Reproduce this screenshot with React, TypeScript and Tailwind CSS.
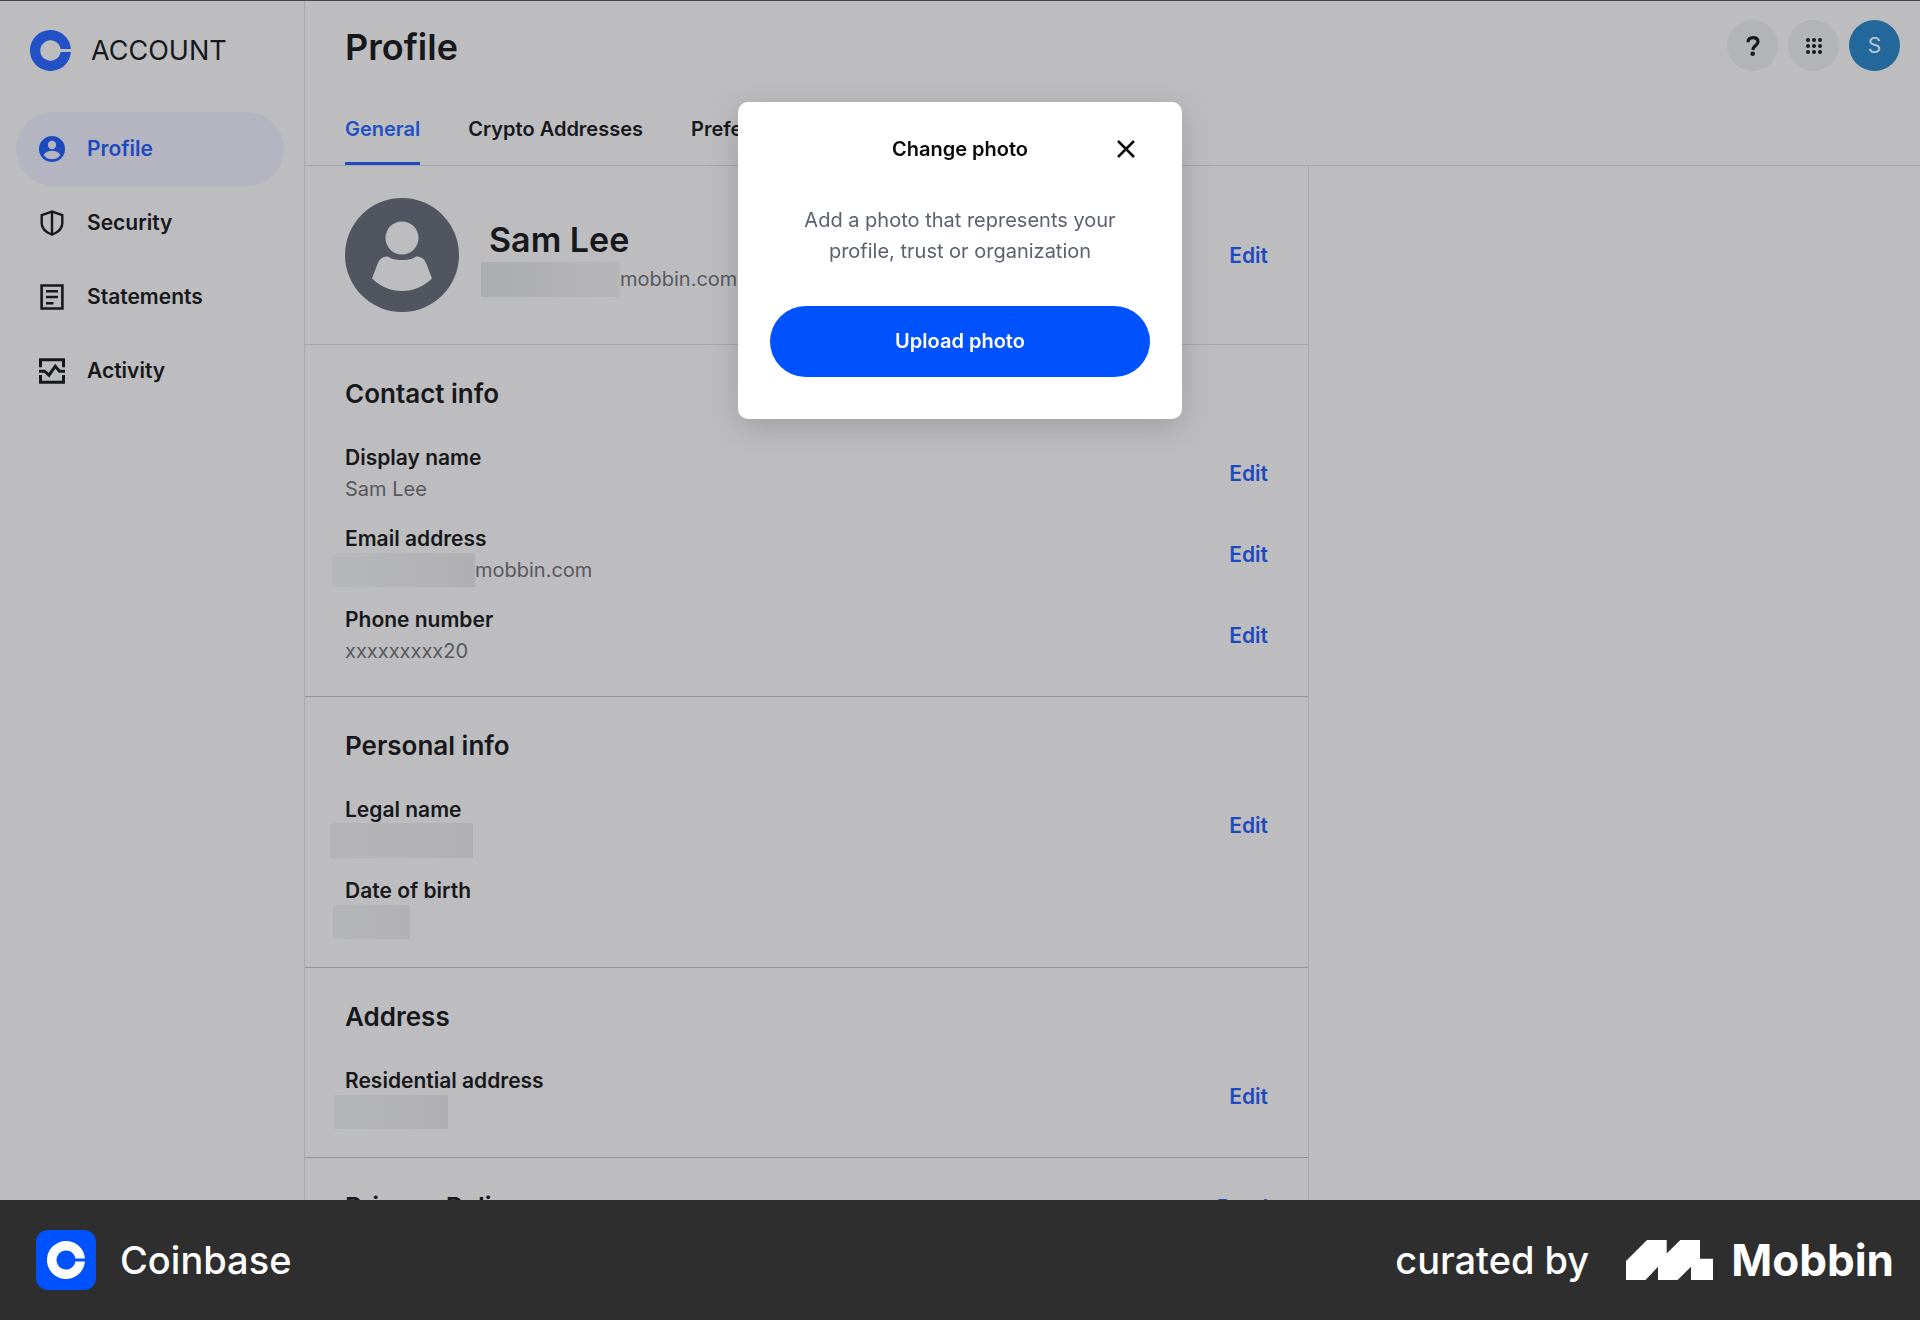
import type { ReactNode } from 'react';

function CoinMark({ className }: { className: string }) {
  return (
    <svg viewBox="0 0 40 40" className={className} aria-hidden="true">
      <path
        fill="currentColor"
        d="M20 0a20 20 0 1 0 19.9 21.5H29.9A10 10 0 1 1 29.9 18.5H39.9A20 20 0 0 0 20 0z"
      />
    </svg>
  );
}

function ProfileIcon() {
  return (
    <svg viewBox="0 0 26 26" className="size-[26px]" aria-hidden="true">
      <circle cx="13" cy="13" r="13" fill="currentColor" />
      <circle cx="13" cy="9" r="4.2" fill="#b4b5c1" />
      <path d="M4.5 19C6.5 16 9.5 14.8 13 14.8S19.500 16 21.500 19C19.500 21.700 16.500 23.300 13 23.300S6.500 21.700 4.500 19z" fill="#b4b5c1" />
    </svg>
  );
}

function ShieldIcon() {
  return (
    <svg viewBox="0 0 26 26" className="size-[26px]" fill="none" stroke="currentColor" strokeWidth="2.400" aria-hidden="true">
      <path d="M13 1.600 2.700 5V13.500C2.700 19 7.500 22.500 13 24.700 18.500 22.500 23.300 19 23.300 13.500V5z" />
      <path d="M13 1.600V24.700" />
    </svg>
  );
}

function StatementIcon() {
  return (
    <svg viewBox="0 0 26 26" className="size-[26px]" fill="none" stroke="currentColor" strokeWidth="2.600" aria-hidden="true">
      <path d="M2.600 1.500H23.400V24.500H2.600z" />
      <path d="M7 7.300H19M7 13H19M7 19.300H14.500" />
    </svg>
  );
}

function ActivityIcon() {
  return (
    <svg viewBox="0 0 26 26" className="size-[26px]" fill="none" stroke="currentColor" strokeWidth="3" aria-hidden="true">
      <path d="M1.500 9.300V1.700H24.500V9.300M1.500 17V24.300H24.500V17" />
      <path d="M0 13.200H5.500L10 17.200 16.300 8.200 20.500 13.200H26" />
    </svg>
  );
}

const navItems: { label: string; icon: ReactNode; active?: boolean }[] = [
  { label: 'Profile', icon: <ProfileIcon />, active: true },
  { label: 'Security', icon: <ShieldIcon /> },
  { label: 'Statements', icon: <StatementIcon /> },
  { label: 'Activity', icon: <ActivityIcon /> },
];

function Sidebar() {
  return (
    <aside className="w-[305px] shrink-0 border-r border-[#a9a9ac]">
      <a href="#account" className="flex items-center gap-5 pt-[29px] pl-[30px]">
        <CoinMark className="size-[41px] text-[#2251c5]" />
        <span className="text-[27px] leading-[41px]">ACCOUNT</span>
      </a>
      <nav className="mt-[41px] pr-5 pl-4">
        {navItems.map((item) => (
          <a
            key={item.label}
            href={'#' + item.label.toLowerCase()}
            className={
              item.active
                ? 'flex h-[74px] items-center gap-[22px] rounded-full bg-[#b4b5c1] pl-[23px] text-[21px] font-semibold text-[#1d4abf]'
                : 'flex h-[74px] items-center gap-[22px] rounded-full pl-[23px] text-[21px] font-semibold'
            }
          >
            {item.icon}
            {item.label}
          </a>
        ))}
      </nav>
    </aside>
  );
}

function Header() {
  return (
    <header className="flex h-[165px] shrink-0 flex-col justify-between border-b border-[#a5a6a9] pr-5 pl-10">
      <div className="flex items-start justify-between pt-[19px]">
        <h1 className="text-[36px] leading-[54px] font-semibold">Profile</h1>
        <div className="flex gap-[10px]">
          <button aria-label="Help" className="flex size-[51px] items-center justify-center rounded-full bg-[#b2b4b8]">
            <svg viewBox="0 0 14 20" className="h-5 w-3.5" aria-hidden="true">
              <path d="M2 6.200C2 3.200 4 1.700 7 1.700S12 3.200 12 6C12 9.200 7.200 9.300 6.800 14" fill="none" stroke="currentColor" strokeWidth="3.200" />
              <circle cx="6.700" cy="17.700" r="2.300" fill="currentColor" />
            </svg>
          </button>
          <button aria-label="Apps" className="flex size-[51px] items-center justify-center rounded-full bg-[#b2b4b8]">
            <svg viewBox="0 0 16 16" className="size-4" fill="currentColor" aria-hidden="true">
              {[2, 8, 14].map((y) => [2, 8, 14].map((x) => <circle key={x + '-' + y} cx={x} cy={y} r="2" />))}
            </svg>
          </button>
          <button aria-label="Account menu" className="size-[51px] rounded-full bg-[#23689a] text-[21px] text-[#b9c6d0]">
            S
          </button>
        </div>
      </div>
      <nav className="flex gap-12 text-xl leading-[31px] font-semibold">
        <a href="#general" className="border-b-3 border-[#1d4abf] pb-[17px] text-[#2251c5]">
          General
        </a>
        <a href="#crypto">Crypto Addresses</a>
        <a href="#preferences">Preferences</a>
      </nav>
    </header>
  );
}

function EditButton({ label = 'Edit' }: { label?: string }) {
  return <button className="text-[21px] leading-[31px] font-semibold text-[#1d4abf]">{label}</button>;
}

function Section({ title, action, children }: { title: string; action?: ReactNode; children?: ReactNode }) {
  return (
    <section className="border-b border-[#929498] px-10 pt-[31px] pb-[30px]">
      <div className="flex items-center justify-between">
        <h2 className="text-[26px] leading-9 font-semibold">{title}</h2>
        {action}
      </div>
      <div className="mt-[30px] flex flex-col gap-[19px]">{children}</div>
    </section>
  );
}

function Row({ label, editable = true, children }: { label: string; editable?: boolean; children: ReactNode }) {
  return (
    <div className="flex items-center justify-between leading-[31px]">
      <div>
        <h3 className="text-[21px] font-semibold">{label}</h3>
        <div className="flex h-[31px] items-center text-xl text-[#57585f]">{children}</div>
      </div>
      {editable && <EditButton />}
    </div>
  );
}

function Dialog() {
  return (
    <div className="fixed inset-0 flex items-start justify-center pt-[102px]">
      <div
        role="dialog"
        aria-labelledby="dialog-title"
        className="w-[444px] rounded-[10px] bg-white px-8 pt-[31px] pb-[42px] text-center text-xl leading-[31px] shadow-[0_8px_32px_rgba(0,0,0,0.16)]"
      >
        <div className="grid grid-cols-[32px_1fr_32px] items-center px-2">
          <h2 id="dialog-title" className="col-start-2 font-semibold text-[#0a0b0d]">
            Change photo
          </h2>
          <button aria-label="Close" className="flex h-8 items-center justify-center">
            <svg viewBox="0 0 18 18" className="size-[18px]" fill="none" stroke="#0a0b0d" strokeWidth="2.500" aria-hidden="true">
              <path d="M1 1 17 17M17 1 1 17" />
            </svg>
          </button>
        </div>
        <p className="mt-10 text-[#5b616e]">
          Add a photo that represents your
          <br />
          profile, trust or organization
        </p>
        <button className="mt-[39px] h-[71px] w-full rounded-full bg-[#0052ff] font-semibold text-white">Upload photo</button>
      </div>
    </div>
  );
}

function Footer() {
  return (
    <footer className="relative z-10 flex h-[120px] shrink-0 items-center justify-between bg-[#2e2e2e] pr-[26px] pl-9 text-white">
      <div className="flex items-center gap-6">
        <span className="flex size-[60px] items-center justify-center rounded-xl bg-[#0052ff]">
          <CoinMark className="size-[38px] text-white" />
        </span>
        <span className="text-[38px] leading-[60px] font-medium">Coinbase</span>
      </div>
      <div className="flex items-center">
        <span className="text-[38px] leading-[60px] font-medium">curated by</span>
        <svg viewBox="0 0 87 40" className="mr-[18px] ml-[37px] h-10 w-[87px]" fill="currentColor" aria-hidden="true">
          <path d="M0 21 21 0H40.700V13.500L54.300 0H74V18.700H87V40H65V26.700L51.600 40H32V26.700L19.500 40H0z" />
        </svg>
        <span className="text-[44px] leading-[60px] font-bold">Mobbin</span>
      </div>
    </footer>
  );
}

export default function App() {
  return (
    <div className="flex h-screen flex-col overflow-hidden border-t border-[#48484c] bg-[#bdbdbf] font-['Inter','Liberation_Sans',sans-serif] text-[#17181b]">
      <div className="flex min-h-0 flex-1 overflow-hidden">
        <Sidebar />
        <div className="flex min-w-0 flex-1 flex-col">
          <Header />
          <main className="w-full max-w-[1004px] flex-1 border-r border-[#a9a9ac]">
            <section className="flex h-[179px] items-center justify-between border-b border-[#a5a6a9] px-10">
              <div className="flex items-center">
                <svg viewBox="0 0 114 114" className="size-[114px]" aria-hidden="true">
                  <circle cx="57" cy="57" r="57" fill="#51555f" />
                  <circle cx="57" cy="40" r="16.500" fill="#bdbdbf" />
                  <path
                    fill="#bdbdbf"
                    d="M43 58.500C48 63.300 66 63.300 71 58.500 77 58 80 62 81.500 66L87 80.500C79 88.500 68 93 57 93S35 88.500 27 80.500L32.500 66C34 62 37 58 43 58.500z"
                  />
                </svg>
                <div className="pt-1 pl-[22px]">
                  <h2 className="pl-2 text-[34px] leading-[44px] font-semibold">Sam Lee</h2>
                  <p className="flex items-center text-xl text-[#57585f]">
                    <span className="h-[35px] w-[139px] bg-linear-to-r from-[#acadb0] to-[#b6b6b9]" />
                    mobbin.com
                  </p>
                </div>
              </div>
              <EditButton />
            </section>
            <Section title="Contact info">
              <Row label="Display name">Sam Lee</Row>
              <Row label="Email address">
                <span className="-ml-[13px] h-[34px] w-[143px] bg-linear-to-r from-[#b7b8ba] to-[#b0b0b3]" />
                mobbin.com
              </Row>
              <Row label="Phone number">xxxxxxxxx20</Row>
            </Section>
            <Section title="Personal info">
              <Row label="Legal name">
                <span className="-ml-[15px] h-[35px] w-[143px] bg-linear-to-r from-[#b4b4b7] to-[#b1b1b4]" />
              </Row>
              <Row label="Date of birth" editable={false}>
                <span className="-ml-[12px] h-[34px] w-[77px] bg-linear-to-r from-[#b5b6b8] to-[#b1b1b4]" />
              </Row>
            </Section>
            <Section title="Address">
              <Row label="Residential address">
                <span className="-ml-[11px] h-[34px] w-[114px] bg-linear-to-r from-[#b5b6b8] to-[#b0b0b3]" />
              </Row>
            </Section>
            <Section title="Privacy Policy" action={<EditButton label="Read" />} />
          </main>
        </div>
      </div>
      <Footer />
      <Dialog />
    </div>
  );
}
